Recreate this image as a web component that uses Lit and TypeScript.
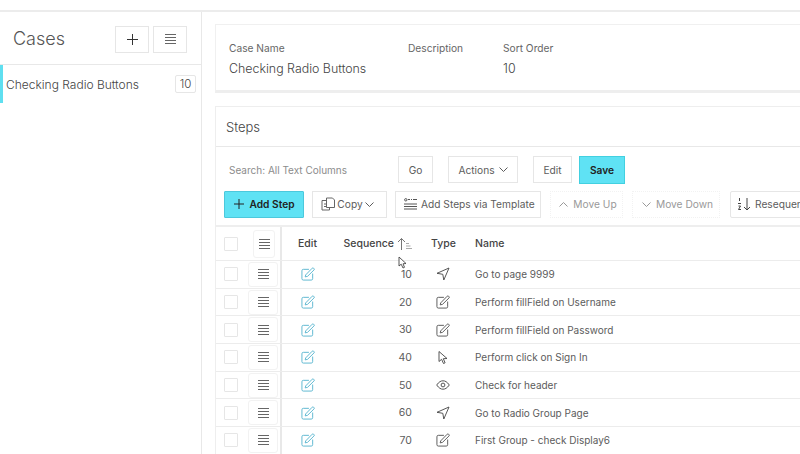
import { LitElement, html, css, svg } from "lit";
import { customElement } from "lit/decorators.js";

const menuIcon = html`<svg class="ico" width="11" height="10" viewBox="0 0 11 10"><path d="M0 .5h11M0 3.500h11M0 6.500h11M0 9.500h11" stroke="#666" fill="none"/></svg>`;
const editPath = svg`<path d="M8.500 2.500H2.500A1.500 1.500 0 0 0 1 4v8.500A1.500 1.500 0 0 0 2.500 14H11a1.500 1.500 0 0 0 1.500-1.500V7"/><path d="M5 8.500 12 1.300a1 1 0 0 1 1.500 0l.4.400a1 1 0 0 1 0 1.500L7 10l-2.500.6z"/>`;
const editBlue = html`<svg width="14" height="14" viewBox="0 0 15 15" fill="none" stroke="#57b5cf" stroke-width="1">${editPath}</svg>`;
const editDark = html`<svg width="14" height="14" viewBox="0 0 15 15" fill="none" stroke="#555" stroke-width="1">${editPath}</svg>`;
const nav = html`<svg width="14" height="14" viewBox="0 0 14 14" fill="none" stroke="#444" stroke-width=".9" stroke-linejoin="round"><path d="M13 1 1 6.300l5.800 1 1 5.700z"/></svg>`;
const pointer = html`<svg width="12" height="15" viewBox="0 0 12 14" fill="none" stroke="#444" stroke-width=".9" stroke-linejoin="round"><path d="M2 1v10l2.600-2.200L6.500 13l1.600-.7L6.300 8.200 10 8z"/></svg>`;
const eye = html`<svg width="14" height="10" viewBox="0 0 14 10" fill="none" stroke="#444" stroke-width=".9"><path d="M.7 5C3 1.700 5 .8 7 .8s4 .9 6.300 4.200C11 8.300 9 9.200 7 9.200S3 8.300.7 5z"/><circle cx="7" cy="5" r="1.900"/></svg>`;
const chev = html`<svg class="chev" width="9" height="5" viewBox="0 0 9 5" fill="none" stroke="currentColor"><path d="m.5.5 4 4 4-4"/></svg>`;
const chevUp = html`<svg class="mv" width="9" height="5" viewBox="0 0 9 5" fill="none" stroke="#999"><path d="m.5 4.500 4-4 4 4"/></svg>`;
const chevDn = html`<svg class="mv" width="9" height="5" viewBox="0 0 9 5" fill="none" stroke="#999"><path d="m.5.5 4 4 4-4"/></svg>`;
const copyIcon = html`<svg width="14" height="14" viewBox="0 0 14 14" fill="none" stroke="#666"><path d="M5.500 3.500H1v9.500h7.500V11"/><path d="M5.500 1h6l2 2v7.500h-8z"/><path d="M3 7h3M3 9.500h3"/></svg>`;
const tplIcon = html`<svg width="13" height="12" viewBox="0 0 13 12" fill="none" stroke="#555"><circle cx="1.800" cy="1.800" r="1.200"/><path d="M4 1.500h2M7 1.500h1M9 1.500h4M0 6h13M0 8.500h13M0 11h13"/></svg>`;
const reseq = html`<svg width="14" height="14" viewBox="0 0 14 14" fill="none" stroke="#444"><path d="M2.500 1v3M1 6.500h3M1.500 9h2l-2 3.500h2.500M10 1v12M7 10l3 3 3-3"/></svg>`;
const sortIcon = html`<svg width="15" height="12" viewBox="0 0 15 12" fill="none" stroke="#777"><path d="M4.500 12V.5M1 4l3.500-3.500L8 4"/><path d="M9 5.500h3M9 8h4.500M9 10.500h6" stroke="#aaa"/></svg>`;

const rows = [
  ["10", nav, "Go to page 9999"],
  ["20", editDark, "Perform fillField on Username"],
  ["30", editDark, "Perform fillField on Password"],
  ["40", pointer, "Perform click on Sign In"],
  ["50", eye, "Check for header"],
  ["60", nav, "Go to Radio Group Page"],
  ["70", editDark, "First Group - check Display6"],
];

@customElement("app-root")
export class AppRoot extends LitElement {
  static styles = css`
    :host { display: block; width: 800px; height: 454px; overflow: hidden; position: relative; background: #fff;
      font-family: Inter, "Liberation Sans", sans-serif; font-size: 10px; color: #5c5c5c; }
    svg { display: block; flex: none; }
    .page { margin-top: 10px; height: 444px; border-top: 2px solid #ececec; display: flex; box-sizing: border-box; }
    .side { width: 202px; flex: none; border-right: 1px solid #e8e8e8; box-sizing: border-box; }
    .side-head { height: 53px; display: flex; align-items: center; padding: 0 14px 0 13px; gap: 4px; border-bottom: 1px solid #e8e8e8; box-sizing: border-box; }
    .side-title { font-size: 18px; font-weight: 300; color: #555; flex: 1; }
    .sq { width: 34px; height: 27px; border: 1px solid #e6e6e6; display: flex; align-items: center; justify-content: center; box-sizing: border-box; margin-top: 2px; }
    .item { height: 38px; display: flex; align-items: center; border-left: 3px solid #5fdff0; padding: 0 5px 0 3px; justify-content: space-between; font-size: 12px; font-weight: 300; color: #444; }
    .badge { width: 21px; height: 18px; border: 1px solid #e6e6e6; border-radius: 2px; display: flex; align-items: center; justify-content: center; box-sizing: border-box; font-size: 11.500px; color: #444; }
    .main { flex: 1; min-width: 0; padding: 12px 0 0 13px; overflow: hidden; }
    .card1 { height: 69px; border: 1px solid #f0f0f0; border-bottom: 3px solid #eee; border-right: none; box-sizing: border-box; padding: 16px 13px 0; display: grid; grid-template-columns: 179px 95px 1fr; grid-template-rows: 14px 14px; row-gap: 6px; align-items: center; font-size: 10.200px; color: #666; }
    .val { font-size: 12.400px; font-weight: 300; color: #444; }
    .card2 { margin-top: 13px; border-top: 1px solid #eee; border-left: 1px solid #eee; }
    .steps-title { height: 40px; display: flex; align-items: center; padding-left: 10px; font-size: 13px; font-weight: 300; color: #444; border-bottom: 1px solid #e8e8e8; box-sizing: border-box; }
    .bar1 { height: 35px; display: flex; align-items: center; margin-top: 5px; padding-left: 13px; white-space: nowrap; }
    .search { width: 169px; font-size: 10px; color: #8c8c8c; }
    .btn { height: 27px; border: 1px solid #e6e6e6; box-sizing: border-box; display: flex; align-items: center; justify-content: center; gap: 4px; font-size: 10.200px; color: #5c5c5c; white-space: nowrap; flex: none; }
    .go { width: 35px; }
    .actions { width: 70px; margin-left: 15px; }
    .edit { width: 39px; margin-left: 15px; }
    .save { width: 46px; margin-left: 7px; height: 28px; background: #5fe2f4; border-color: #42d0e0; color: #222; font-weight: 600; }
    .bar2 { height: 28px; display: flex; align-items: center; gap: 8px; padding-left: 8px; margin-top: 3px; }
    .add { width: 80px; background: #5fe2f4; border-color: #4cc8dc; color: #222; font-weight: 600; gap: 5px; border-radius: 1px; padding-left: 1px; }
    .copy { width: 75px; gap: 2px; padding-right: 4px; }
    .tpl { width: 146px; justify-content: flex-start; padding-left: 8px; }
    .mu { width: 73px; color: #999; border-style: dotted; border-color: #f2f2f2; gap: 5px; margin-left: 1px; padding-left: 3px; }
    .md { width: 88px; color: #999; border-style: dotted; border-color: #f2f2f2; gap: 5px; margin-left: 1px; padding-left: 3px; }
    .rs { width: 100px; flex: none; margin-left: 2px; border-radius: 2px; justify-content: flex-start; padding-left: 6px; }
    .table { margin-top: 7px; border-top: 2px solid #eee; }
    .row { display: grid; grid-template-columns: 66px 53px 89px 38px 1fr; height: 27.700px; align-items: center; border-bottom: 1px solid #ececec; box-sizing: border-box; }
    .row.head { height: 34px; font-weight: 500; font-size: 10.500px; color: #444; }
    .frozen { height: 100%; border-right: 2px solid #e8e8e8; display: flex; align-items: center; box-sizing: content-box; }
    .cb { width: 14px; height: 14px; border: 1px solid #e6e6e6; margin-left: 8px; flex: none; box-sizing: border-box; border-radius: 1px; }
    .drag { width: 30px; height: 25px; border: 1px solid #f2f2f2; border-radius: 3px; margin-left: 10px; display: flex; align-items: center; justify-content: center; box-sizing: border-box; flex: none; }
    .head .drag { width: 22px; height: 28px; margin-left: 15px; }
    .c-edit { padding-left: 19px; }
    .c-seq { text-align: right; padding-right: 12px; font-size: 10.500px; color: #5c5c5c; }
    .head .c-seq { display: flex; align-items: center; justify-content: flex-end; gap: 3px; padding-right: 12px; font-size: 10.500px; color: #444; }
    .c-type { display: flex; justify-content: center; }
    .head .c-type { justify-content: flex-start; padding-left: 7px; }
    .c-name { padding-left: 13px; font-size: 10px; color: #5c5c5c; white-space: nowrap; }
    .head .c-name { font-size: 10.500px; color: #444; }
    .head .c-edit { padding-left: 16px; }
    .cursor { position: absolute; left: 398px; top: 256px; }
  `;

  render() {
    return html`
      <div class="page">
        <div class="side">
          <div class="side-head">
            <div class="side-title">Cases</div>
            <div class="sq"><svg width="11" height="11" viewBox="0 0 11 11"><path d="M5.500 0v11M0 5.500h11" stroke="#333" fill="none"/></svg></div>
            <div class="sq">${menuIcon}</div>
          </div>
          <div class="item"><span>Checking Radio Buttons</span><span class="badge">10</span></div>
        </div>
        <div class="main">
          <div class="card1">
            <span>Case Name</span><span>Description</span><span>Sort Order</span>
            <span class="val">Checking Radio Buttons</span><span></span><span class="val">10</span>
          </div>
          <div class="card2">
            <div class="steps-title">Steps</div>
            <div class="bar1">
              <span class="search">Search: All Text Columns</span>
              <div class="btn go">Go</div>
              <div class="btn actions">Actions ${chev}</div>
              <div class="btn edit">Edit</div>
              <div class="btn save">Save</div>
            </div>
            <div class="bar2">
              <div class="btn add"><svg width="10" height="10" viewBox="0 0 10 10"><path d="M5 0v10M0 5h10" stroke="#222" fill="none"/></svg>Add Step</div>
              <div class="btn copy">${copyIcon}Copy ${chev}</div>
              <div class="btn tpl">${tplIcon}Add Steps via Template</div>
              <div class="btn mu">${chevUp}Move Up</div>
              <div class="btn md">${chevDn}Move Down</div>
              <div class="btn rs">${reseq}Resequence</div>
            </div>
            <div class="table">
              <div class="row head">
                <div class="frozen"><span class="cb"></span><span class="drag">${menuIcon}</span></div>
                <div class="c-edit">Edit</div>
                <div class="c-seq">Sequence ${sortIcon}</div>
                <div class="c-type">Type</div>
                <div class="c-name">Name</div>
              </div>
              ${rows.map(
                (r) => html`<div class="row">
                  <div class="frozen"><span class="cb"></span><span class="drag">${menuIcon}</span></div>
                  <div class="c-edit">${editBlue}</div>
                  <div class="c-seq">${r[0]}</div>
                  <div class="c-type">${r[1]}</div>
                  <div class="c-name">${r[2]}</div>
                </div>`
              )}
            </div>
          </div>
        </div>
      </div>
      <svg class="cursor" width="9" height="13" viewBox="0 0 9 13"><path d="M1 1v9l2.200-1.800L5 12l1.500-.7L5 7.800 8 7.500z" fill="#fff" stroke="#444" stroke-width=".9"/></svg>
    `;
  }
}
